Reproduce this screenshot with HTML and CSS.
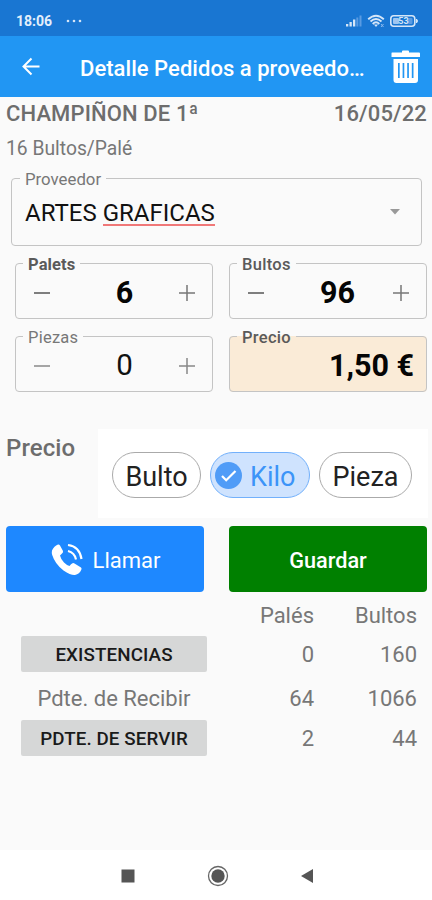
FILE: index.html
```html
<!DOCTYPE html>
<html lang="es">
<head>
<meta charset="utf-8">
<title>Detalle Pedidos a proveedores</title>
<link rel="stylesheet" href="styles.css">
</head>
<body>
<div class="phone">
  <header class="status">
    <span class="clock">18:06</span>
    <svg class="dots" width="16" height="4" viewBox="0 0 16 4"><circle cx="2" cy="2" r="1.3"/><circle cx="8" cy="2" r="1.3"/><circle cx="14" cy="2" r="1.3"/></svg>
    <svg class="signals" width="76" height="16" viewBox="0 0 76 16">
      <g fill="#d5e6f8"><rect x="2" y="11" width="2.3" height="2.500"/><rect x="5.500" y="9" width="2.3" height="4.500"/><rect x="9" y="6.500" width="2.300" height="7"/></g>
      <g fill="#5a9be2"><rect x="12.300" y="4.500" width="2" height="9"/><rect x="15.500" y="2.500" width="2" height="11"/></g>
      <g fill="none" stroke="#d5e6f8" stroke-width="1.900"><path d="M24.200 6.300Q32 -.8 39.800 6.300"/><path d="M26.500 8.500Q32 3.700 37.500 8.500"/><path d="M28.700 11Q32 7.600 35.300 11"/></g>
      <path d="M30 11.500h4L32 14z" fill="#d5e6f8"/><path d="M37 11l2.500 3M39.500 11l-2.500 3" stroke="#8bbaf0" stroke-width="1"/>
      <rect x="46.800" y="2.800" width="24" height="10.500" rx="3" fill="none" stroke="#d5e6f8" stroke-width="1.600"/>
      <rect x="49" y="5" width="6" height="6" rx="1" fill="#9fc6f0"/><rect x="64" y="5" width="4.500" height="6" rx="1" fill="#5a9be2"/>
      <path d="M72.500 6q2 2 0 4z" fill="#d5e6f8" stroke="#d5e6f8"/>
      <text x="59.500" y="11.300" text-anchor="middle" class="charge">53</text>
    </svg>
  </header>
  <nav class="appbar">
    <svg class="back" width="20" height="20" viewBox="0 0 20 20"><path d="M18.500 9.500H2.500M10.500 1.500l-8 8 8 8" fill="none" stroke="#fff" stroke-width="2"/></svg>
    <h1>Detalle Pedidos a proveedo…</h1>
    <svg class="trash" width="30" height="34" viewBox="0 0 30 34"><path fill="#fff" fill-rule="evenodd" d="M1 2.500h10V1.500Q11 .5 12 .5h5Q18 .5 18 1.500v1h10q1 0 1 1V7H.500V3.500Q.500 2.500 1 2.500zM2.500 9h24.500v21q0 3-3 3H5.500q-3 0-3-3zM7 13v15h1.700V13zM11.600 13v15h1.700V13zM16.200 13v15h1.700V13zM20.800 13v15h1.700V13z"/></svg>
  </nav>
  <main>
    <div class="product"><span class="name">CHAMPIÑON DE 1ª</span><span class="date">16/05/22</span></div>
    <p class="pack">16 Bultos/Palé</p>
    <fieldset class="field supplier">
      <legend><span class="label">Proveedor</span></legend>
      <div class="inner"><span class="value">ARTES <span class="misspelt">GRAFICAS</span></span>
      <svg width="10" height="6" viewBox="0 0 10 6"><path d="M0 0h10L5 5.500z" fill="#999"/></svg></div>
    </fieldset>
    <div class="fields">
      <fieldset class="field strong dark">
        <legend><span class="label">Palets</span></legend>
        <div class="inner"><svg class="op" viewBox="0 0 16 16"><path d="M0 8h16"/></svg><span class="qty">6</span><svg class="op plus" viewBox="0 0 16 16"><path d="M0 8h16M8 0v16"/></svg></div>
      </fieldset>
      <fieldset class="field strong">
        <legend><span class="label">Bultos</span></legend>
        <div class="inner"><svg class="op" viewBox="0 0 16 16"><path d="M0 8h16"/></svg><span class="qty wide">96</span><svg class="op plus" viewBox="0 0 16 16"><path d="M0 8h16M8 0v16"/></svg></div>
      </fieldset>
      <fieldset class="field light">
        <legend><span class="label">Piezas</span></legend>
        <div class="inner"><svg class="op" viewBox="0 0 16 16"><path d="M0 8h16"/></svg><span class="qty">0</span><svg class="op plus" viewBox="0 0 16 16"><path d="M0 8h16M8 0v16"/></svg></div>
      </fieldset>
      <fieldset class="field strong price">
        <legend><span class="label">Precio</span></legend>
        <div class="inner"><span class="amount">1,50 €</span></div>
      </fieldset>
    </div>
    <section class="unit">
      <h2>Precio</h2>
      <div class="chips">
        <span class="chip c1"><span>Bulto</span></span>
        <span class="chip c2 on"><svg width="27" height="27" viewBox="0 0 27 27"><circle cx="13.500" cy="13.500" r="13.500" fill="#509cf7"/><path d="M7 14l4.200 4.200L20.500 9" fill="none" stroke="#fff" stroke-width="2.200"/></svg><span>Kilo</span></span>
        <span class="chip c3"><span>Pieza</span></span>
      </div>
    </section>
    <div class="actions">
      <button class="call"><svg width="33" height="33" viewBox="0 0 33 33"><path fill="#fff" d="M2 7.500Q4 3 8 1.500Q9.300 1.300 10 2.500L13 8Q13.300 9.500 12 10.500L10 12.500Q10.500 15.500 14 19.500Q17 22.500 19.500 23Q21 21 22.500 20.200Q23.500 19.800 24.500 20.400L31 24.500Q32 25.500 31.300 26.700Q29.500 31 25 32Q21 32.500 13.500 27.500Q5 21 2.200 12Q1.500 9.500 2 7.500z"/><path d="M18 2Q29.500 3.500 31.500 16M18 8Q24.500 9.500 26 16.500" fill="none" stroke="#fff" stroke-width="2.200"/></svg><span>Llamar</span></button>
      <button class="save"><span>Guardar</span></button>
    </div>
    <div class="stock">
      <span></span><span class="num">Palés</span><span class="num">Bultos</span>
      <button class="stock-btn"><span>EXISTENCIAS</span></button><span class="num">0</span><span class="num">160</span>
      <span class="pending">Pdte. de Recibir</span><span class="num">64</span><span class="num">1066</span>
      <button class="stock-btn"><span>PDTE. DE SERVIR</span></button><span class="num">2</span><span class="num">44</span>
    </div>
  </main>
  <footer class="navbar">
    <svg width="14" height="14" viewBox="0 0 14 14"><rect x=".5" y=".5" width="13" height="13" fill="#555"/></svg>
    <svg width="22" height="22" viewBox="0 0 22 22"><circle cx="11" cy="11" r="9.500" fill="none" stroke="#666" stroke-width="1.300"/><circle cx="11" cy="11" r="6.700" fill="#555"/></svg>
    <svg width="14" height="16" viewBox="0 0 14 16"><path d="M13 1v14L1 8z" fill="#555"/></svg>
  </footer>
</div>
</body>
</html>
```
FILE: styles.css
```css
* { box-sizing: border-box; }
body { margin: 0; background: #fafafa; font-family: Roboto, "Liberation Sans", sans-serif; color: #6d6d6d; }
svg { display: block; flex: none; }
h1, h2, p { margin: 0; }
button { border: 0; font-family: inherit; padding: 0; }
span { white-space: nowrap; }
.phone { width: 432px; height: 900px; display: flex; flex-direction: column; overflow: hidden; }
.status { height: 36px; background: #1976d2; display: flex; align-items: center; padding: 5px 12px 0 16px; color: #e3effb; }
.clock { font-size: 14px; font-weight: 700; line-height: 18px; width: 50px; padding-top: 1px; }
.dots { fill: #d5e6f8; }
.signals { margin-left: auto; }
.charge { font-size: 9px; font-weight: 700; fill: #d5e6f8; }
.appbar { height: 61px; background: #2196f3; display: flex; align-items: center; padding: 0 11px 0 21px; }
.back { margin-right: 39px; }
h1 { color: #fff; font-size: 22px; letter-spacing: 0.04px; font-weight: 500; line-height: 30px; padding-top: 4px; white-space: nowrap; }
.trash { margin-left: auto; }
main { flex: 1; }
.product { display: flex; justify-content: space-between; padding: 4px 5px 0 6px; font-size: 22px; font-weight: 500; line-height: 26px; height: 34px; }
.name { letter-spacing: 0.12px; }
.date { letter-spacing: 0.12px; }
.pack { font-size: 19.3px; line-height: 26px; padding: 5px 0 0 6px; height: 39px; color: #777; }
.field { margin: 0; padding: 0; border: 1px solid #c4c4c4; border-radius: 4px; min-width: 0; }
legend { height: 16px; margin-left: 8px; padding: 0 5px; line-height: 19px; font-size: 16.5px; }
.label { display: block; color: #777; }
.inner { display: flex; align-items: center; }
.supplier { margin: 0 10px 0 11px; height: 76px; }
.supplier legend { font-size: 16.8px; }
.supplier .inner { height: 52px; justify-content: space-between; padding: 0 21px 0 13px; }
.value { color: #111; font-size: 24px; line-height: 26px; padding-top: 1px; }
.misspelt { display: inline-block; border-bottom: 2px solid #f07878; line-height: 22px; }
.fields { display: grid; grid-template-columns: 198px 198px; column-gap: 16px; row-gap: 9px; padding: 9px 5px 0 15px; }
.fields .field { height: 64px; }
.fields .inner { height: 43px; padding: 0 17px 0 18px; }
.fields legend { margin-left: 7px; line-height: 20px; }
.strong .label { font-weight: 500; color: #5a5a5a; letter-spacing: 0.3px; }
.light .label { letter-spacing: 0.25px; }
.dark .label { font-weight: 700; letter-spacing: 0.1px; }
.op { width: 16px; height: 16px; stroke: #555; stroke-width: 1.5; fill: none; }
.plus { stroke: #777; }
.light .op { stroke: #888; }
.qty { flex: 1; text-align: center; padding-left: 20px; font-size: 30.5px; line-height: 34px; color: #111; }
.wide { padding-left: 18px; }
.light .qty { font-size: 29.5px; padding-bottom: 1px; }
.strong .qty, .amount { font-weight: 700; color: #050505; }
.price { background: #faebd7; }
.amount { margin-left: auto; margin-right: -5px; font-size: 30.5px; line-height: 34px; }
.unit { display: flex; justify-content: space-between; height: 89px; margin-top: 37px; padding: 0 4px 0 6px; }
h2 { font-size: 24px; letter-spacing: 0.1px; font-weight: 500; line-height: 28px; padding-top: 5px; }
.chips { width: 330px; background: #fff; display: flex; gap: 9px; align-items: center; padding: 3px 0 0 14px; }
.chip { height: 46px; border: 1px solid #aaa; border-radius: 23px; display: flex; align-items: center; justify-content: center; font-size: 27px; color: #222; }
.chip span { padding-top: 3px; }
.c1 { width: 89px; }
.c2 { width: 100px; gap: 8px; }
.c3 { width: 93px; }
.on { background: #cfe3fe; border-color: #72b0fb; color: #3c94f8; justify-content: flex-start; padding-left: 4px; }
.actions { display: flex; justify-content: space-between; padding: 8px 5px 0 6px; }
.actions button { width: 198px; height: 66px; border-radius: 4px; color: #fff; font-size: 22px; display: flex; align-items: center; justify-content: center; }
.actions button span { padding-top: 3px; }
.call { background: #1e88ff; gap: 10px; }
.actions .save { background: #008000; font-weight: 500; font-size: 21.7px; }
.stock { display: grid; grid-template-columns: 186px 107px 103px; grid-template-rows: 44px 36px 48px 36px; align-items: center; padding-left: 21px; font-size: 22px; color: #777; }
.num { text-align: right; padding-top: 2px; }
.stock-btn { height: 36px; background: #d6d7d7; color: #1a1a1a; font-size: 18.8px; font-weight: 500; border-radius: 2px; }
.stock-btn span { display: block; padding-top: 1px; letter-spacing: 0.1px; }
.stock-btn ~ .num { padding-top: 1px; }
.pending { text-align: center; }
.pending, .pending ~ .num { padding-top: 5px; }
.stock-btn ~ .stock-btn ~ .num { padding-top: 1px; }
.navbar { height: 50px; background: #fff; display: flex; align-items: center; justify-content: space-between; padding: 2px 118px 0 121px; }
```
